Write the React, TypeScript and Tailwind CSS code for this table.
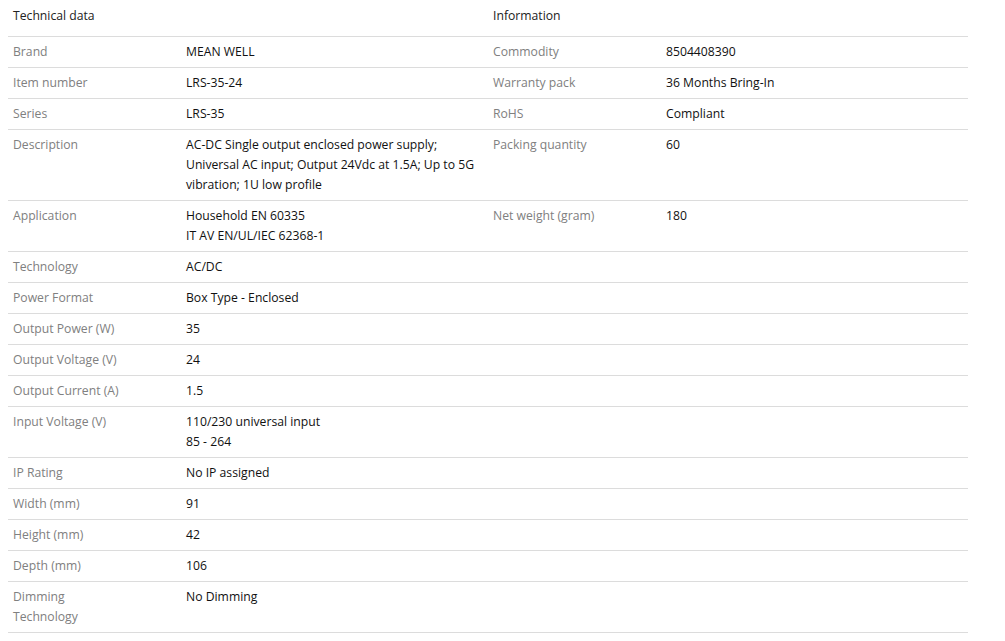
const left: [string, string[]][] = [
  ["Brand", ["MEAN WELL"]],
  ["Item number", ["LRS-35-24"]],
  ["Series", ["LRS-35"]],
  [
    "Description",
    [
      "AC-DC Single output enclosed power supply; Universal AC input; Output 24Vdc at 1.5A; Up to 5G vibration; 1U low profile",
    ],
  ],
  ["Application", ["Household EN 60335", "IT AV EN/UL/IEC 62368-1"]],
  ["Technology", ["AC/DC"]],
  ["Power Format", ["Box Type - Enclosed"]],
  ["Output Power (W)", ["35"]],
  ["Output Voltage (V)", ["24"]],
  ["Output Current (A)", ["1.5"]],
  ["Input Voltage (V)", ["110/230 universal input", "85 - 264"]],
  ["IP Rating", ["No IP assigned"]],
  ["Width (mm)", ["91"]],
  ["Height (mm)", ["42"]],
  ["Depth (mm)", ["106"]],
  ["Dimming Technology", ["No Dimming"]],
];

const right: [string, string][] = [
  ["Commodity", "8504408390"],
  ["Warranty pack", "36 Months Bring-In"],
  ["RoHS", "Compliant"],
  ["Packing quantity", "60"],
  ["Net weight (gram)", "180"],
];

export default function App() {
  return (
    <div
      className="bg-white px-2 text-[12.2px] leading-5"
      style={{ fontFamily: '"Open Sans", "Liberation Sans", sans-serif' }}
    >
      <table className="w-[960px] table-fixed border-collapse">
        <colgroup>
          <col className="w-[173px]" />
          <col className="w-[307px]" />
          <col className="w-[173px]" />
          <col className="w-[307px]" />
        </colgroup>
        <thead>
          <tr className="border-b border-[#dcdcdc]">
            <th colSpan={2} className="px-[5px] pt-[6px] pb-[10px] text-left font-normal text-[#222]">
              Technical data
            </th>
            <th colSpan={2} className="px-[5px] pt-[6px] pb-[10px] text-left font-normal text-[#222]">
              Information
            </th>
          </tr>
        </thead>
        <tbody>
          {left.map(([label, values], i) => (
            <tr key={label} className="border-b border-[#dcdcdc] align-top">
              <td className="px-[5px] py-[5px] text-[#808080]">
                <div className="max-w-[112px]">{label}</div>
              </td>
              <td className="px-[5px] py-[5px] text-[#111]">
                {values.map((v) => (
                  <div key={v}>{v}</div>
                ))}
              </td>
              <td className="px-[5px] py-[5px] text-[#808080]">{right[i]?.[0]}</td>
              <td className="px-[5px] py-[5px] text-[#111]">{right[i]?.[1]}</td>
            </tr>
          ))}
        </tbody>
      </table>
    </div>
  );
}
